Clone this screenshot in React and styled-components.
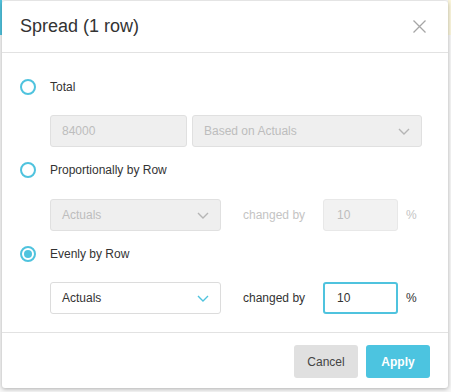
import React from "react";
import styled, { createGlobalStyle } from "styled-components";

const TEAL = "#4fc3de";

const GlobalStyle = createGlobalStyle`
  html, body {
    margin: 0;
    padding: 0;
    width: 451px;
    height: 392px;
    overflow: hidden;
    background:
      linear-gradient(${TEAL}, ${TEAL}) 0 0 / 2px 35px no-repeat,
      linear-gradient(#fbf6dc, #fbf6dc) 448px 0 / 3px 35px no-repeat,
      #f7f7f7;
    font-family: "Liberation Sans", Arial, sans-serif;
  }
`;

const Page = styled.div`
  padding: 1px 3px 0 2px;
`;

const Modal = styled.div`
  width: 446px;
  height: 387px;
  background: #fff;
  border-radius: 3px;
  box-shadow: 0 1px 4px rgba(0, 0, 0, 0.3);
  display: flex;
  flex-direction: column;
  box-sizing: border-box;
`;

const Header = styled.div`
  height: 51px;
  border-bottom: 1px solid #e2e2e2;
  display: flex;
  align-items: center;
  justify-content: space-between;
  padding: 0 22px 0 18px;
  flex-shrink: 0;
`;

const Title = styled.h2`
  margin: 0;
  font-size: 18px;
  font-weight: 400;
  color: #333;
`;

const Close = styled.button`
  width: 14px;
  height: 14px;
  padding: 0;
  border: 0;
  background: transparent;
  display: flex;
  align-items: center;
  justify-content: center;
  cursor: pointer;
`;

const Body = styled.div`
  flex: 1;
  padding: 24px 18px 0 18px;
  display: flex;
  flex-direction: column;
`;

const Section = styled.div`
  display: flex;
  flex-direction: column;
  gap: ${({ gap }) => gap || 19}px;
  margin-bottom: 13px;
`;

const RadioLine = styled.label`
  height: 20px;
  display: flex;
  align-items: center;
  gap: 14px;
  font-size: 12px;
  color: #333;
  cursor: pointer;
`;

const RadioCircle = styled.span`
  width: 16px;
  height: 16px;
  box-sizing: border-box;
  border: 2px solid ${TEAL};
  border-radius: 50%;
  display: flex;
  align-items: center;
  justify-content: center;
  &::after {
    content: "";
    width: 8px;
    height: 8px;
    border-radius: 50%;
    background: ${({ checked }) => (checked ? TEAL : "transparent")};
  }
`;

const Row = styled.div`
  display: flex;
  align-items: center;
  height: 32px;
  padding-left: 30px;
`;

const Field = styled.div`
  box-sizing: border-box;
  height: 32px;
  width: ${({ w }) => w}px;
  margin-right: ${({ mr }) => mr || 0}px;
  border: 1px solid ${({ disabled }) => (disabled ? "#e0e0e0" : "#dcdcdc")};
  background: ${({ disabled }) => (disabled ? "#efefef" : "#fff")};
  color: ${({ disabled }) => (disabled ? "#bdbdbd" : "#333")};
  border-radius: 3px;
  font-size: 12px;
  display: flex;
  align-items: center;
  justify-content: space-between;
  padding: 0 11px 0 11px;
`;

const NumInput = styled.input`
  box-sizing: border-box;
  height: 32px;
  width: ${({ w }) => w}px;
  border: ${({ focused }) => (focused ? `2px solid ${TEAL}` : "1px solid #e8e8e8")};
  background: ${({ disabled }) => (disabled ? "#f2f2f2" : "#fff")};
  color: ${({ disabled }) => (disabled ? "#bdbdbd" : "#333")};
  border-radius: 3px;
  font-family: "Liberation Sans", Arial, sans-serif;
  font-size: 12px;
  padding: 0 0 0 ${({ focused }) => (focused ? 12 : 13)}px;
  outline: none;
`;

const Caption = styled.span`
  font-size: 12px;
  color: ${({ disabled }) => (disabled ? "#c4c4c4" : "#333")};
  margin: 0 ${({ mr }) => mr}px 0 ${({ ml }) => ml}px;
`;

const Footer = styled.div`
  border-top: 1px solid #e2e2e2;
  display: flex;
  justify-content: flex-end;
  gap: 8px;
  padding: 12px 18px 10px 0;
  flex-shrink: 0;
`;

const Button = styled.button`
  width: 64px;
  height: 33px;
  border: 0;
  border-radius: 3px;
  font-family: "Liberation Sans", Arial, sans-serif;
  font-size: 12px;
  font-weight: ${({ primary }) => (primary ? 700 : 400)};
  background: ${({ primary }) => (primary ? "#4cc4e0" : "#e0e0e0")};
  color: ${({ primary }) => (primary ? "#fff" : "#444")};
  cursor: pointer;
`;

const Chevron = ({ color }) => (
  <svg width="12" height="7" viewBox="0 0 12 7">
    <path d="M1 1l5 5 5-5" fill="none" stroke={color} strokeWidth="1.4" />
  </svg>
);

const Select = ({ w, mr, disabled, children }) => (
  <Field w={w} mr={mr} disabled={disabled}>
    <span>{children}</span>
    <Chevron color={disabled ? "#b5b5b5" : TEAL} />
  </Field>
);

const App = () => (
  <>
    <GlobalStyle />
    <Page>
      <Modal>
        <Header>
          <Title>Spread (1 row)</Title>
          <Close aria-label="Close">
            <svg width="13" height="13" viewBox="0 0 13 13">
              <path d="M0.5 0.5l12 12M12.5 0.5l-12 12" stroke="#a6a6a6" strokeWidth="1.3" />
            </svg>
          </Close>
        </Header>
        <Body>
          <Section gap={18}>
            <RadioLine>
              <RadioCircle />
              Total
            </RadioLine>
            <Row>
              <Field w={137} mr={5} disabled>
                84000
              </Field>
              <Select w={230} disabled>
                Based on Actuals
              </Select>
            </Row>
          </Section>
          <Section gap={19}>
            <RadioLine>
              <RadioCircle />
              Proportionally by Row
            </RadioLine>
            <Row>
              <Select w={171} disabled>
                Actuals
              </Select>
              <Caption disabled ml={22} mr={18}>
                changed by
              </Caption>
              <NumInput w={75} disabled value="10" readOnly />
              <Caption disabled ml={8} mr={0}>
                %
              </Caption>
            </Row>
          </Section>
          <Section gap={18}>
            <RadioLine>
              <RadioCircle checked />
              Evenly by Row
            </RadioLine>
            <Row>
              <Select w={171}>Actuals</Select>
              <Caption ml={22} mr={18}>
                changed by
              </Caption>
              <NumInput w={75} focused value="10" readOnly />
              <Caption ml={8} mr={0}>
                %
              </Caption>
            </Row>
          </Section>
        </Body>
        <Footer>
          <Button>Cancel</Button>
          <Button primary>Apply</Button>
        </Footer>
      </Modal>
    </Page>
  </>
);

export default App;
